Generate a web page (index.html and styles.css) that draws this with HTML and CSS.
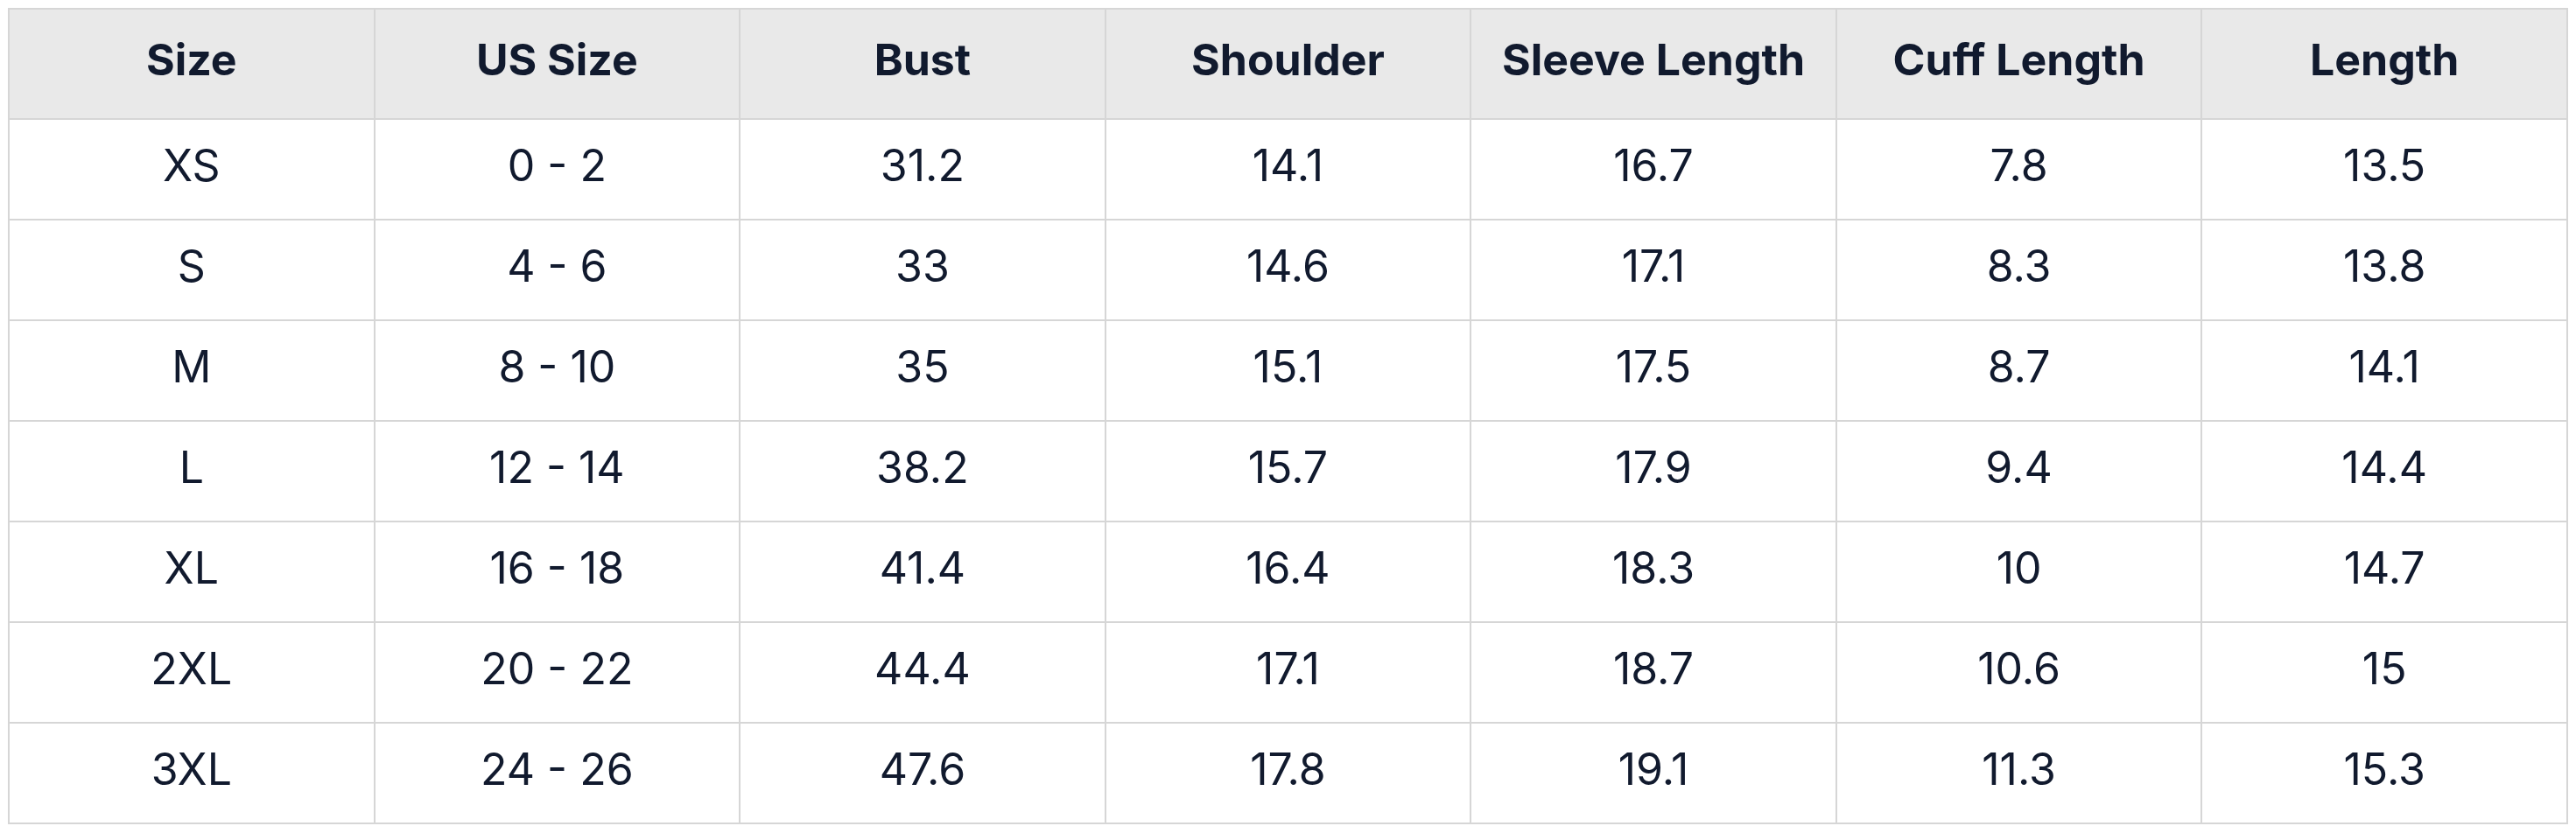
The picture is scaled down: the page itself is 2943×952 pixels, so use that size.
FILE: index.html
```html
<!DOCTYPE html>
<html lang="en">
<head>
<meta charset="utf-8">
<title>Size Chart</title>
<link rel="stylesheet" href="styles.css">
</head>
<body>
<table class="size-chart">
  <thead>
    <tr>
      <th>Size</th><th>US Size</th><th>Bust</th><th>Shoulder</th><th>Sleeve Length</th><th>Cuff Length</th><th>Length</th>
    </tr>
  </thead>
  <tbody>
    <tr><td>XS</td><td>0 - 2</td><td>31.2</td><td>14.1</td><td>16.7</td><td>7.8</td><td>13.5</td></tr>
    <tr><td>S</td><td>4 - 6</td><td>33</td><td>14.6</td><td>17.1</td><td>8.3</td><td>13.8</td></tr>
    <tr><td>M</td><td>8 - 10</td><td>35</td><td>15.1</td><td>17.5</td><td>8.7</td><td>14.1</td></tr>
    <tr><td>L</td><td>12 - 14</td><td>38.2</td><td>15.7</td><td>17.9</td><td>9.4</td><td>14.4</td></tr>
    <tr><td>XL</td><td>16 - 18</td><td>41.4</td><td>16.4</td><td>18.3</td><td>10</td><td>14.7</td></tr>
    <tr><td>2XL</td><td>20 - 22</td><td>44.4</td><td>17.1</td><td>18.7</td><td>10.6</td><td>15</td></tr>
    <tr><td>3XL</td><td>24 - 26</td><td>47.6</td><td>17.8</td><td>19.1</td><td>11.3</td><td>15.3</td></tr>
  </tbody>
</table>
</body>
</html>
```
FILE: styles.css
```css
html, body {
  margin: 0;
  padding: 0;
  background: #ffffff;
}
body {
  padding: 9px;
  font-family: "Inter", "Noto Sans", sans-serif;
  color: #111a2e;
}
.size-chart {
  width: 100%;
  border-collapse: collapse;
  table-layout: fixed;
}
.size-chart th,
.size-chart td {
  border: 2px solid #d6d6d6;
  text-align: center;
  vertical-align: middle;
  font-size: 50px;
  line-height: 60px;
  padding: 0;
}
.size-chart th {
  background: #e9e9e9;
  font-weight: 700;
  height: 126px;
  padding-bottom: 10px;
  box-sizing: border-box;
}
.size-chart td {
  font-weight: 400;
  height: 115px;
  padding-bottom: 10px;
  box-sizing: border-box;
}
```
